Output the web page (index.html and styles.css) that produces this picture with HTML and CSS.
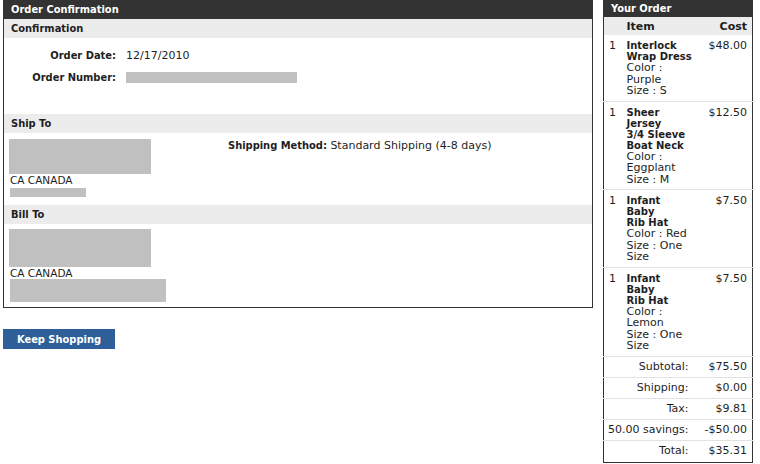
FILE: index.html
```html
<!DOCTYPE html>
<html lang="en">
<head>
  <meta charset="UTF-8">
  <title>Order Confirmation</title>
  <link rel="stylesheet" href="styles.css">
</head>
<body>

  <div class="page">

    <div class="main">
      <div class="panel-title">Order Confirmation</div>
      <div class="panel-body">

        <div class="section-head">Confirmation</div>
        <div class="confirm">
          <div class="info-label">Order Date:</div>
          <div>12/17/2010</div>
          <div class="info-label">Order Number:</div>
          <div><div class="blank blank-number"></div></div>
        </div>

        <div class="section-head">Ship To</div>
        <div class="ship-row">
          <div class="address">
            <div class="blank blank-name"></div>
            <div class="country">CA CANADA</div>
            <div class="blank blank-phone"></div>
          </div>
          <div class="ship-method"><b>Shipping Method:</b> Standard Shipping (4-8 days)</div>
        </div>

        <div class="section-head">Bill To</div>
        <div class="bill-row">
          <div class="blank blank-bill"></div>
          <div class="country">CA CANADA</div>
          <div class="blank blank-email"></div>
        </div>

      </div>

      <button type="button" class="btn-keep">Keep Shopping</button>
    </div>

    <div class="side">
      <div class="side-title">Your Order</div>
      <table class="order-table">
        <colgroup>
          <col class="col-qty">
          <col class="col-name">
          <col>
        </colgroup>
        <thead>
          <tr>
            <th></th>
            <th class="th-item">Item</th>
            <th class="th-cost">Cost</th>
          </tr>
        </thead>
        <tbody>
          <tr class="item">
            <td class="qty">1</td>
            <td>
              <div class="item-name">Interlock<br>Wrap Dress</div>
              <div class="item-detail">Color : Purple</div>
              <div class="item-detail">Size : S</div>
            </td>
            <td class="cost">$48.00</td>
          </tr>
          <tr class="item">
            <td class="qty">1</td>
            <td>
              <div class="item-name">Sheer<br>Jersey<br>3/4 Sleeve<br>Boat Neck</div>
              <div class="item-detail">Color : Eggplant</div>
              <div class="item-detail">Size : M</div>
            </td>
            <td class="cost">$12.50</td>
          </tr>
          <tr class="item">
            <td class="qty">1</td>
            <td>
              <div class="item-name">Infant<br>Baby<br>Rib Hat</div>
              <div class="item-detail">Color : Red</div>
              <div class="item-detail">Size : One Size</div>
            </td>
            <td class="cost">$7.50</td>
          </tr>
          <tr class="item">
            <td class="qty">1</td>
            <td>
              <div class="item-name">Infant<br>Baby<br>Rib Hat</div>
              <div class="item-detail">Color : Lemon</div>
              <div class="item-detail">Size : One Size</div>
            </td>
            <td class="cost">$7.50</td>
          </tr>
          <tr class="total">
            <td colspan="2" class="total-label">Subtotal:</td>
            <td class="total-value">$75.50</td>
          </tr>
          <tr class="total">
            <td colspan="2" class="total-label">Shipping:</td>
            <td class="total-value">$0.00</td>
          </tr>
          <tr class="total">
            <td colspan="2" class="total-label">Tax:</td>
            <td class="total-value">$9.81</td>
          </tr>
          <tr class="total">
            <td colspan="2" class="total-label">50.00 savings:</td>
            <td class="total-value">-$50.00</td>
          </tr>
          <tr class="total total-last">
            <td colspan="2" class="total-label">Total:</td>
            <td class="total-value">$35.31</td>
          </tr>
        </tbody>
      </table>
    </div>

  </div>

</body>
</html>
```

FILE: styles.css
```css
body { margin: 0; font-family: "DejaVu Sans", Verdana, sans-serif; font-size: 11px; color: #1e1e1e; background: #fff; }
.page { display: flex; align-items: flex-start; gap: 10px; padding-left: 3px; }

/* left column */
.main { width: 590px; }
.panel-title { height: 19px; line-height: 19px; padding-left: 8px; background: #333; color: #fff; font-family: "DejaVu Sans Condensed", "DejaVu Sans", sans-serif; font-weight: bold; }
.panel-body { border: 1px solid #333; border-top: none; }
.section-head { height: 19px; line-height: 19px; padding-left: 7px; background: #ececec; font-family: "DejaVu Sans Condensed", "DejaVu Sans", sans-serif; font-weight: bold; color: #1e1e1e; }
.confirm { display: grid; grid-template-columns: 112px auto; grid-auto-rows: 22px; column-gap: 10px; align-items: center; padding: 6px 0 26px; }
.info-label { text-align: right; font-family: "DejaVu Sans Condensed", "DejaVu Sans", sans-serif; font-weight: bold; }
.blank { background: #c0c0c0; }
.blank-number { width: 171px; height: 11px; }
.ship-row { display: flex; padding: 6px 0 8px 5px; }
.address { width: 219px; }
.blank-name { width: 142px; height: 35px; }
.country { font-size: 10.5px; line-height: 13px; padding-left: 1px; }
.blank-phone { width: 76px; height: 9px; margin: 1px 0 0 1px; }
.ship-method { line-height: 13px; }
.ship-method b { font-family: "DejaVu Sans Condensed", "DejaVu Sans", sans-serif; }
.bill-row { padding: 5px 0 5px 5px; }
.bill-row .country { line-height: 12px; }
.blank-bill { width: 142px; height: 38px; }
.blank-email { width: 156px; height: 23px; margin-left: 1px; }
.btn-keep { display: block; margin-top: 21px; width: 112px; height: 20px; padding: 0; border: none; background: #2f5f98; color: #fff; font-family: "DejaVu Sans Condensed", "DejaVu Sans", sans-serif; font-size: 11px; font-weight: bold; cursor: pointer; }

/* right column */
.side { width: 150px; }
.side-title { height: 17px; line-height: 17px; padding-left: 8px; background: #333; color: #fff; font-family: "DejaVu Sans Condensed", "DejaVu Sans", sans-serif; font-weight: bold; }
.order-table { width: 150px; border-collapse: collapse; table-layout: fixed; border: 1px solid #333; border-top: none; }
.col-qty { width: 23px; }
.col-name { width: 70px; }
.order-table th { height: 18px; padding: 0; background: #ececec; font-weight: bold; text-align: left; }
.order-table th.th-cost { text-align: right; padding-right: 5px; }
.order-table td { padding: 0; vertical-align: top; }
.order-table tbody tr + tr td { border-top: 1px solid #e2e2e2; }
.item td { padding: 5px 0 4px; }
.item td.qty { padding-left: 5px; line-height: 11px; }
.item td.cost { padding-right: 5px; text-align: right; line-height: 11px; }
.item-name { font-size: 10px; line-height: 11px; font-weight: bold; }
.item-detail { line-height: 11.5px; }
.total td { height: 20px; line-height: 20px; vertical-align: middle; text-align: right; }
.total-last td { height: 21px; }
.total td.total-label { padding-right: 8px; }
.total td.total-value { padding-right: 5px; }
```
